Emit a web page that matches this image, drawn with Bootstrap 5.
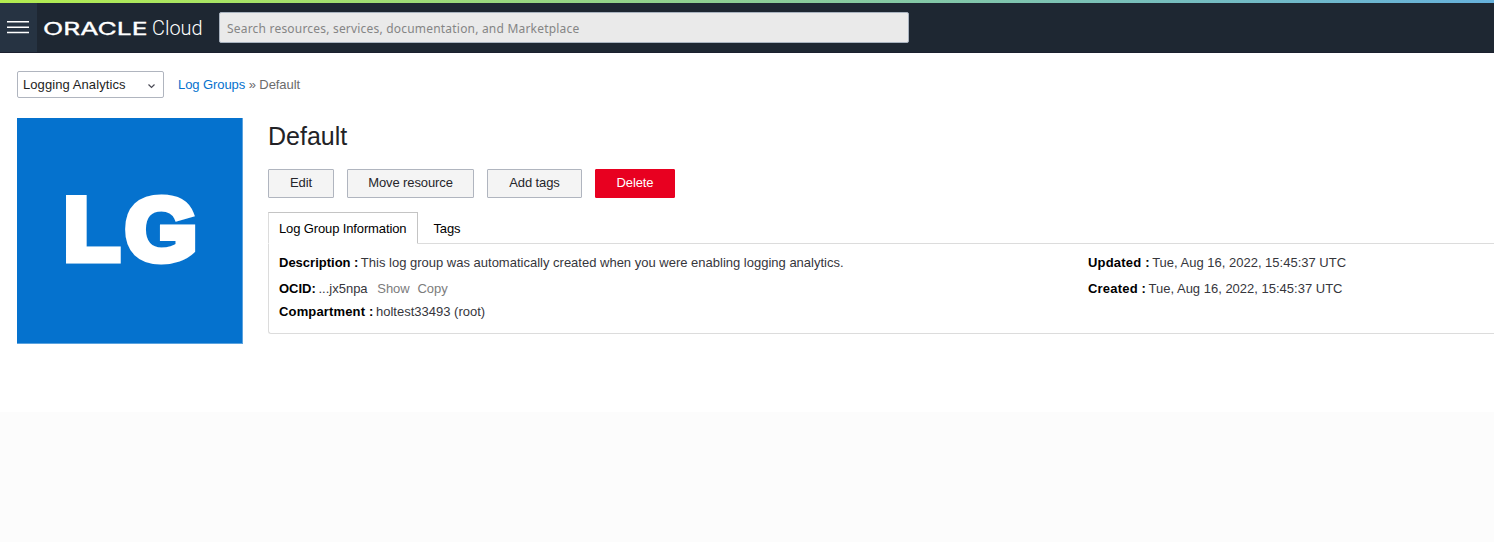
<!DOCTYPE html>
<html lang="en">
<head>
<meta charset="utf-8">
<meta name="viewport" content="width=device-width, initial-scale=1">
<title>Log Group Details</title>
<link rel="stylesheet" href="https://cdn.jsdelivr.net/npm/bootstrap@5.3.0/dist/css/bootstrap.min.css">
<style>
  body { font-family: "Liberation Sans", Arial, sans-serif; font-size: 13px; line-height: 16px; color: #36363c; background: #fcfcfc; overflow: hidden; }
  .accent { height: 3px; background: linear-gradient(90deg, #b3ec50, #66b1dc); }
  .topbar { height: 50px; background: #1e2732; border-bottom: 1px solid #1b202f; }
  .menu-btn { width: 37px; background: #263342; }
  .search-box { width: 690px; height: 31px; margin-left: 12px; padding: 1px 7px 0; border: 1px solid #a9b3bf; border-radius: 2px; background: #eaeaea; font-family: "Noto Sans", sans-serif; font-size: 12px; letter-spacing: .2px; }
  .search-box::placeholder { color: #858585; opacity: 1; }
  .page { height: 359px; padding: 18px 0 0 17px; background: #fff; }
  .service { width: 147px; height: 27px; padding: 0 7px 0 5px; border: 1px solid #b0b5bf; border-radius: 2px; color: #1e1e22; background: #fff; font-size: inherit; line-height: 16px; letter-spacing: .08px; }
  .crumbs { margin-left: 14px; color: #6b6b6b; letter-spacing: -.08px; }
  .crumbs a { color: #0572ce; }
  .tile { width: 226px; height: 226px; background: #0572ce; border: solid #5ba3df; border-width: 0 1px 1px 0; }
  .title { font-size: 25px; line-height: 30px; color: #222226; margin: 3px 0 18px; font-weight: 400; }
  .act { height: 29px; padding: 0 0 2px; border: 1px solid #b0b5bf; border-radius: 1px; background: #f4f4f4; color: #26262b; font-size: 13px; line-height: 25px; letter-spacing: -.1px; }
  .act-del { background: #e80020; border-color: #e80020; color: #fff; }
  .info-tabs { height: 32px; margin-top: 14px; border-bottom: 1px solid #dcdcdc; }
  .info-tabs .nav-link { height: 32px; padding: 8px 10px 7px; border: 1px solid transparent; border-radius: 0; color: #000; margin: 0; letter-spacing: -.13px; }
  .info-tabs .nav-link.active { width: 150px; padding-right: 0; white-space: nowrap; border-color: #c4c4c4 #c4c4c4 #fff #dcdcdc; color: #000; }
  .details { height: 90px; padding: 11px 0 0 10px; border: solid #dcdcdc; border-width: 0 0 1px 1px; border-radius: 0 0 0 3px; }
  .details b { color: #000; margin-right: -1px; }
  .left-col { width: 809px; }
  .dates b { letter-spacing: .2px; }
  .muted { color: #7c7c7c; }
</style>
</head>
<body>
<div class="accent"></div>
<header class="topbar d-flex align-items-center">
  <button class="menu-btn btn rounded-0 border-0 p-0 h-100" aria-label="Menu">
    <svg class="d-block" width="37" height="49"><path d="M7 18.8h22M7 24.2h22M7 29.5h22" stroke="#fff" stroke-width="1.6"/></svg>
  </button>
  <svg width="170" height="49" fill="#fff">
    <text x="6" y="32" font-family="Inter" font-size="17.5" font-weight="400" stroke="#fff" stroke-width=".35" textLength="104.5" lengthAdjust="spacingAndGlyphs">ORACLE</text>
    <text x="115" y="32.3" font-family="Roboto" font-size="20" font-weight="300" textLength="50.5" lengthAdjust="spacingAndGlyphs">Cloud</text>
  </svg>
  <input class="search-box" type="text" placeholder="Search resources, services, documentation, and Marketplace">
</header>
<main class="page">
  <div class="d-flex align-items-center">
    <button class="service d-flex align-items-center justify-content-between">Logging Analytics
      <svg width="9" height="8" fill="none" stroke="#4a4a55" stroke-width="1.2"><path d="M1.5 3.5l3 3 3-3"/></svg>
    </button>
    <nav class="crumbs"><a class="text-decoration-none" href="#">Log Groups</a> » Default</nav>
  </div>
  <div class="d-flex" style="margin-top:20px">
    <div class="tile flex-shrink-0">
      <svg class="d-block" width="225" height="225" fill="#fff" stroke="#fff" stroke-width="7" font-family="Liberation Sans" font-weight="700" font-size="88.6">
        <text x="46.6" y="142.3" textLength="56.4" lengthAdjust="spacingAndGlyphs">L</text>
        <text x="107.9" y="142" textLength="72.2" lengthAdjust="spacingAndGlyphs">G</text>
      </svg>
    </div>
    <section class="flex-grow-1" style="margin-left:25px">
      <h1 class="title">Default</h1>
      <div class="d-flex" style="gap:13px">
        <button class="act btn" style="width:66px">Edit</button>
        <button class="act btn" style="width:127px">Move resource</button>
        <button class="act btn" style="width:95px">Add tags</button>
        <button class="act act-del btn" style="width:80px">Delete</button>
      </div>
      <nav class="info-tabs nav nav-tabs">
        <a class="nav-link active" href="#">Log Group Information</a>
        <a class="nav-link" style="padding-left:14.5px" href="#">Tags</a>
      </nav>
      <div class="details d-flex">
        <div class="left-col">
          <div style="margin-bottom:10px"><b>Description :</b> This log group was automatically created when you were enabling logging analytics.</div>
          <div style="margin-bottom:7px"><b>OCID:</b> ...jx5npa <span class="muted" style="margin-left:6px">Show</span> <span class="muted ms-1">Copy</span></div>
          <div><b style="letter-spacing:.15px">Compartment :</b> holtest33493 (root)</div>
        </div>
        <div class="dates">
          <div style="margin-bottom:10px"><b>Updated :</b> Tue, Aug 16, 2022, 15:45:37 UTC</div>
          <div><b>Created :</b> Tue, Aug 16, 2022, 15:45:37 UTC</div>
        </div>
      </div>
    </section>
  </div>
</main>
<script src="https://cdn.jsdelivr.net/npm/bootstrap@5.3.0/dist/js/bootstrap.bundle.min.js"></script>
</body>
</html>
